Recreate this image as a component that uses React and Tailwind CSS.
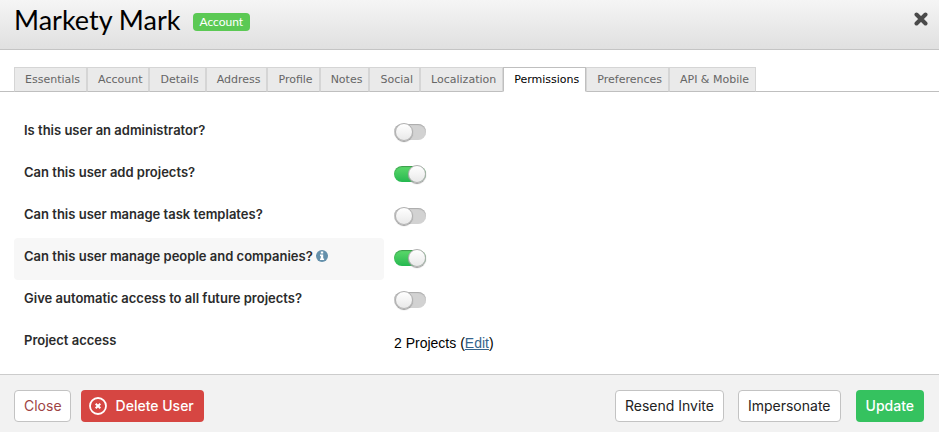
import { useState } from 'react'

const TABS = [
  'Essentials',
  'Account',
  'Details',
  'Address',
  'Profile',
  'Notes',
  'Social',
  'Localization',
  'Permissions',
  'Preferences',
  'API & Mobile',
]

const PERMISSIONS = [
  { id: 'administrator', label: 'Is this user an administrator?', value: false },
  { id: 'add-projects', label: 'Can this user add projects?', value: true },
  { id: 'task-templates', label: 'Can this user manage task templates?', value: false },
  { id: 'manage-people', label: 'Can this user manage people and companies?', value: true, info: true },
  { id: 'future-projects', label: 'Give automatic access to all future projects?', value: false },
]

function InfoIcon() {
  return (
    <svg viewBox="0 0 12 12" className="inline-block size-3 ml-[3px] align-[-1px]" aria-label="More information">
      <circle cx="6" cy="6" r="6" fill="#6490ab" />
      <path d="M4.8 1.6h2.4v1.9H4.8zM4 4.5h3.2v3.9h.9v1.5H4V8.4h.8V6H4z" fill="#fff" />
    </svg>
  )
}

function Toggle({ id, checked, onChange }) {
  return (
    <input
      id={id}
      type="checkbox"
      checked={checked}
      onChange={onChange}
      className="relative block h-4 w-8 cursor-pointer appearance-none rounded-full bg-[#d2d2d2] shadow-[inset_0_1px_1px_#aaaaaa] checked:bg-linear-to-b checked:from-[#5bd96b] checked:to-[#23b850] checked:shadow-[inset_0_1px_1px_#3c9a4c] before:absolute before:-top-px before:left-px before:size-[18px] before:rounded-full before:border before:border-[#b0b0b0] before:bg-linear-to-b before:from-white before:to-[#e9e9e9] before:shadow-[0_1px_1px_#999999] checked:before:left-[14px]"
    />
  )
}

function Tab({ label, active, onClick }) {
  return (
    <button
      type="button"
      role="tab"
      aria-selected={active}
      onClick={onClick}
      className={`h-[25px] border pt-[2px] pl-[10px] pr-[6px] whitespace-nowrap ${
        active
          ? 'border-[#bfbfbf] border-b-white bg-white text-black'
          : 'border-[#d5d5d5] border-b-[#bfbfbf] bg-[#eaeaea] text-[#666666]'
      }`}
    >
      {label}
    </button>
  )
}

export default function App() {
  const [tab, setTab] = useState('Permissions')
  const [values, setValues] = useState(() => Object.fromEntries(PERMISSIONS.map((p) => [p.id, p.value])))

  const toggle = (id) => setValues((prev) => ({ ...prev, [id]: !prev[id] }))

  return (
    <div className="flex min-h-screen flex-col bg-white font-['Inter','Liberation_Sans',sans-serif] text-black">
      {/* Header */}
      <header className="flex h-[50px] items-start border-b border-[#c4c4c4] bg-linear-to-b from-[#f5f5f5] to-[#e0e0e0] px-[14px]">
        <h1 className="font-['Lato',sans-serif] text-[27px] leading-10">Markety Mark</h1>
        <span className="mt-[13px] ml-3 rounded bg-[#5bc954] px-[7px] font-['Lato',sans-serif] text-xs leading-[18px] text-white">
          Account
        </span>
        <button type="button" aria-label="Close dialog" className="mt-3 -mr-[3px] ml-auto cursor-pointer">
          <svg viewBox="0 0 14 14" className="size-[14px]">
            <path d="M2.5 2.5l9 9M11.5 2.5l-9 9" stroke="#4a4a4a" strokeWidth="4" strokeLinecap="round" />
          </svg>
        </button>
      </header>

      {/* Tabs */}
      <div
        role="tablist"
        className="mt-[17px] flex border-b border-[#bfbfbf] px-[14px] font-['DejaVu_Sans',sans-serif] text-[11px] *:-mb-px"
      >
        {TABS.map((name) => (
          <Tab key={name} label={name} active={name === tab} onClick={() => setTab(name)} />
        ))}
      </div>

      {/* Permission rows */}
      <main className="flex-1 px-[14px] pt-5 pb-[10px]">
        {PERMISSIONS.map((p) => (
          <div key={p.id} className="flex h-[42px]">
            <label
              htmlFor={p.id}
              className={`w-[370px] rounded px-[10px] pt-2 text-[13px] leading-5 font-semibold text-[#2b2b2b] ${
                p.info ? 'bg-[#f7f7f7]' : ''
              }`}
            >
              {p.label}
              {p.info && <InfoIcon />}
            </label>
            <div className="pt-3 pl-[10px]">
              <Toggle id={p.id} checked={values[p.id]} onChange={() => toggle(p.id)} />
            </div>
          </div>
        ))}
        <div className="flex h-[42px]">
          <span className="w-[370px] px-[10px] pt-2 text-[13px] leading-5 font-semibold text-[#2b2b2b]">
            Project access
          </span>
          <p className="pt-[11px] pl-[10px] font-['Liberation_Sans',sans-serif] text-sm">
            2 Projects (
            <a href="#projects" className="text-[#36648b] underline">
              Edit
            </a>
            )
          </p>
        </div>
      </main>

      {/* Actions */}
      <footer className="flex items-center border-t border-[#cccccc] bg-[#f2f2f2] px-[14px] pt-[15px] pb-[10px] text-sm">
        <button type="button" className="h-8 rounded border border-[#c3c3c3] bg-white pr-2 pl-[9px] text-[#9e4444]">
          Close
        </button>
        <button
          type="button"
          className="ml-[10px] flex h-8 items-center rounded bg-[#d64642] pr-[10px] pl-2 font-medium text-white"
        >
          <svg viewBox="0 0 18 18" className="mr-[9px] size-[18px]" fill="none" stroke="#fff">
            <circle cx="9" cy="9" r="8" strokeWidth="1.8" />
            <path d="M6.7 6.7l4.6 4.6M11.3 6.7l-4.6 4.6" strokeWidth="2" />
          </svg>
          Delete User
        </button>
        <button type="button" className="ml-auto h-8 rounded border border-[#c3c3c3] bg-white px-[9px] text-[#222222]">
          Resend Invite
        </button>
        <button type="button" className="ml-[14px] h-8 rounded border border-[#c3c3c3] bg-white px-[9px] text-[#222222]">
          Impersonate
        </button>
        <button type="button" className="mr-px ml-[15px] h-8 rounded bg-[#35c25f] px-[10px] font-medium text-white">
          Update
        </button>
      </footer>
    </div>
  )
}
